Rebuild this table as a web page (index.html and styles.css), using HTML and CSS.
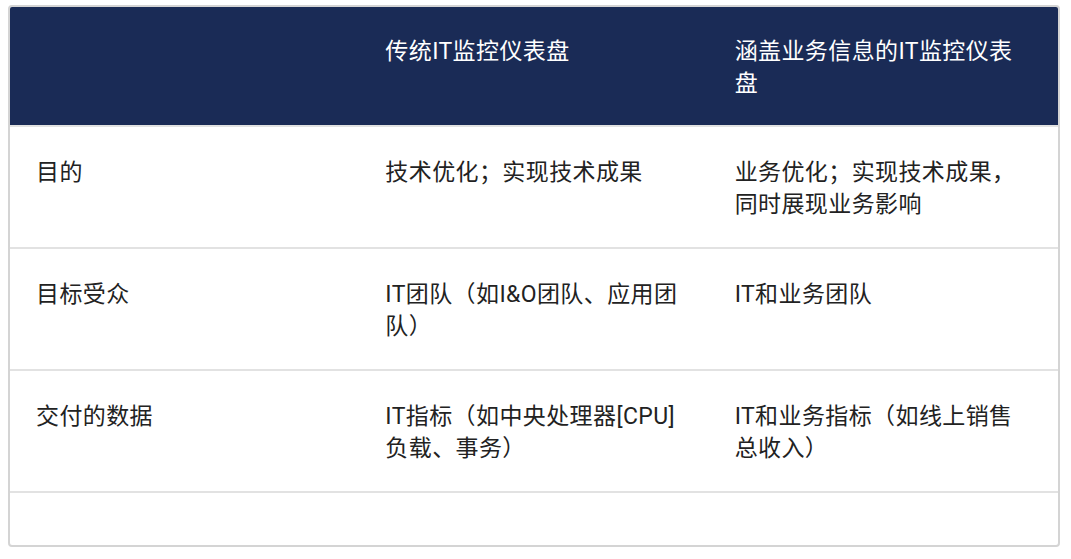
FILE: index.html
```html
<!DOCTYPE html>
<html lang="zh-CN">
<head>
<meta charset="utf-8">
<title>IT监控仪表盘对比</title>
<link rel="stylesheet" href="styles.css">
</head>
<body>
<div class="wrap">
  <table class="compare">
    <thead>
      <tr>
        <th></th>
        <th>传统IT监控仪表盘</th>
        <th>涵盖业务信息的IT监控仪表盘</th>
      </tr>
    </thead>
    <tbody>
      <tr>
        <td>目的</td>
        <td>技术优化；实现技术成果</td>
        <td>业务优化；实现技术成果，同时展现业务影响</td>
      </tr>
      <tr>
        <td>目标受众</td>
        <td>IT团队（如I&amp;O团队、应用团队）</td>
        <td>IT和业务团队</td>
      </tr>
      <tr>
        <td>交付的数据</td>
        <td>IT指标（如中央处理器[CPU]负载、事务）</td>
        <td>IT和业务指标（如线上销售总收入）</td>
      </tr>
      <tr class="empty">
        <td></td>
        <td></td>
        <td></td>
      </tr>
    </tbody>
  </table>
</div>
</body>
</html>
```

FILE: styles.css
```css
html, body {
  margin: 0;
  padding: 0;
  background: #ffffff;
}

.wrap {
  padding: 5px 0 0 8px;
}

.compare {
  width: 1052px;
  table-layout: fixed;
  border-collapse: separate;
  border-spacing: 0;
  border: 2px solid #d4d4d4;
  border-radius: 4px;
  overflow: hidden;
  font-family: Roboto, "Noto Sans CJK SC", sans-serif;
  font-size: 23px;
  letter-spacing: 0.4px;
  line-height: 32px;
  color: #222222;
}

.compare th,
.compare td {
  width: 33.333%;
  text-align: left;
  vertical-align: top;
  font-weight: 400;
}

.compare th {
  background: #1a2b56;
  color: #ffffff;
  padding: 29px 30px 25px 26px;
  border-bottom: 2px solid #e2e2e2;
}

.compare td {
  padding: 30px 30px 26px 26px;
  border-bottom: 2px solid #e2e2e2;
}

.compare tr.empty td {
  padding: 26px 28px;
  border-bottom: none;
}
```
